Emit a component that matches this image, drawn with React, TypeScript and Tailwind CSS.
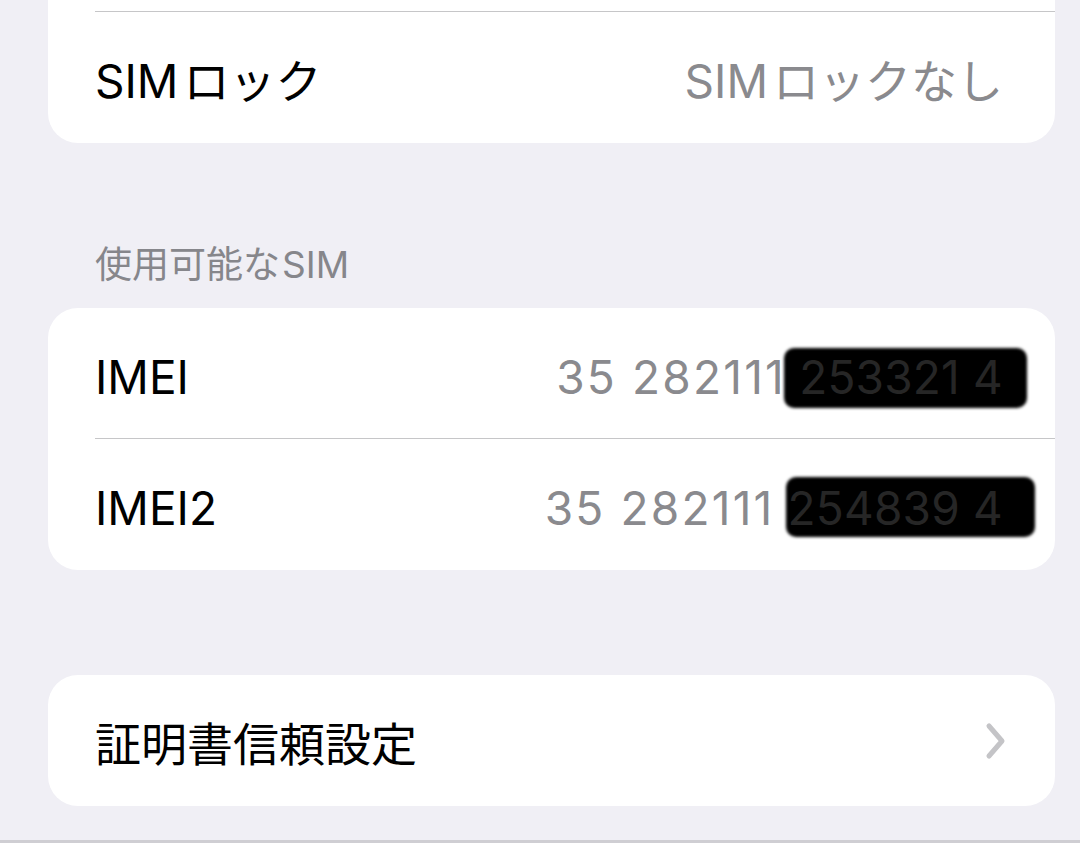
import React from 'react';

const font = { fontFamily: '"Inter", "Noto Sans CJK JP", sans-serif' };

interface RowProps {
  label: React.ReactNode;
  value?: React.ReactNode;
  chevron?: boolean;
  divider?: boolean;
}

const Row: React.FC<RowProps> = ({ label, value, chevron, divider }) => (
  <div className="relative flex h-[131px] items-center justify-between pl-[47px] pr-[52px] pt-[7px]">
    <span className="text-[46px] leading-none text-black">{label}</span>
    {value && <span className="text-[46px] leading-none text-[#8a8a8e]">{value}</span>}
    {chevron && (
      <svg width="22" height="38" viewBox="0 0 22 38" className="mr-[-4px] mt-[-7px]">
        <path d="M4 4 L17 19 L4 34" fill="none" stroke="#c4c4c7" strokeWidth="5" strokeLinecap="round" strokeLinejoin="round" />
      </svg>
    )}
    {divider && <div className="absolute bottom-0 left-[47px] right-0 h-px bg-[#c6c6c8]" />}
  </div>
);

const Sim: React.FC<{ rest: string }> = ({ rest }) => (
  <>
    SIM<span className="ml-[5px]">{rest}</span>
  </>
);

const Redacted: React.FC<{ shown: string; hidden: string; boxClass: string }> = ({ shown, hidden, boxClass }) => (
  <span className="inline-flex items-center">
    <span className="tracking-[2.2px]">{shown}</span>
    <span className="relative whitespace-pre tracking-[0.2px] text-[#262626]">
      <span className={`absolute bg-black blur-[1.5px] ${boxClass}`} />
      <span className="relative">{hidden}</span>
    </span>
  </span>
);

export default function App() {
  return (
    <div className="h-[843px] w-[1080px] overflow-hidden border-b-[3px] border-[#cfced3] bg-[#f0eff5]" style={font}>
      <div className="ml-[48px] mr-[25px] rounded-b-[30px] bg-white">
        <div className="relative h-[12px]">
          <div className="absolute bottom-0 left-[47px] right-0 h-px bg-[#c6c6c8]" />
        </div>
        <Row label={<Sim rest="ロック" />} value={<Sim rest="ロックなし" />} />
      </div>

      <div className="pl-[95px] pt-[103px] pb-[24px] text-[37px] leading-[38px] text-[#86868b]">
        使用可能な<span className="ml-[2px]">SIM</span>
      </div>

      <div className="ml-[48px] mr-[25px] overflow-hidden rounded-[30px] bg-white">
        <Row
          label="IMEI"
          divider
          value={
            <Redacted
              shown="35 282111"
              hidden=" 253321 4"
              boxClass="left-[-2px] right-[-24px] top-[-6px] bottom-[-8px] rounded-[10px]"
            />
          }
        />
        <Row
          label="IMEI2"
          value={
            <Redacted
              shown="35 282111"
              hidden=" 254839 4"
              boxClass="left-[12px] right-[-32px] top-[-8px] bottom-[-6px] rounded-[10px]"
            />
          }
        />
      </div>

      <div className="ml-[48px] mr-[25px] mt-[105px] rounded-[30px] bg-white">
        <Row label="証明書信頼設定" chevron />
      </div>
    </div>
  );
}
